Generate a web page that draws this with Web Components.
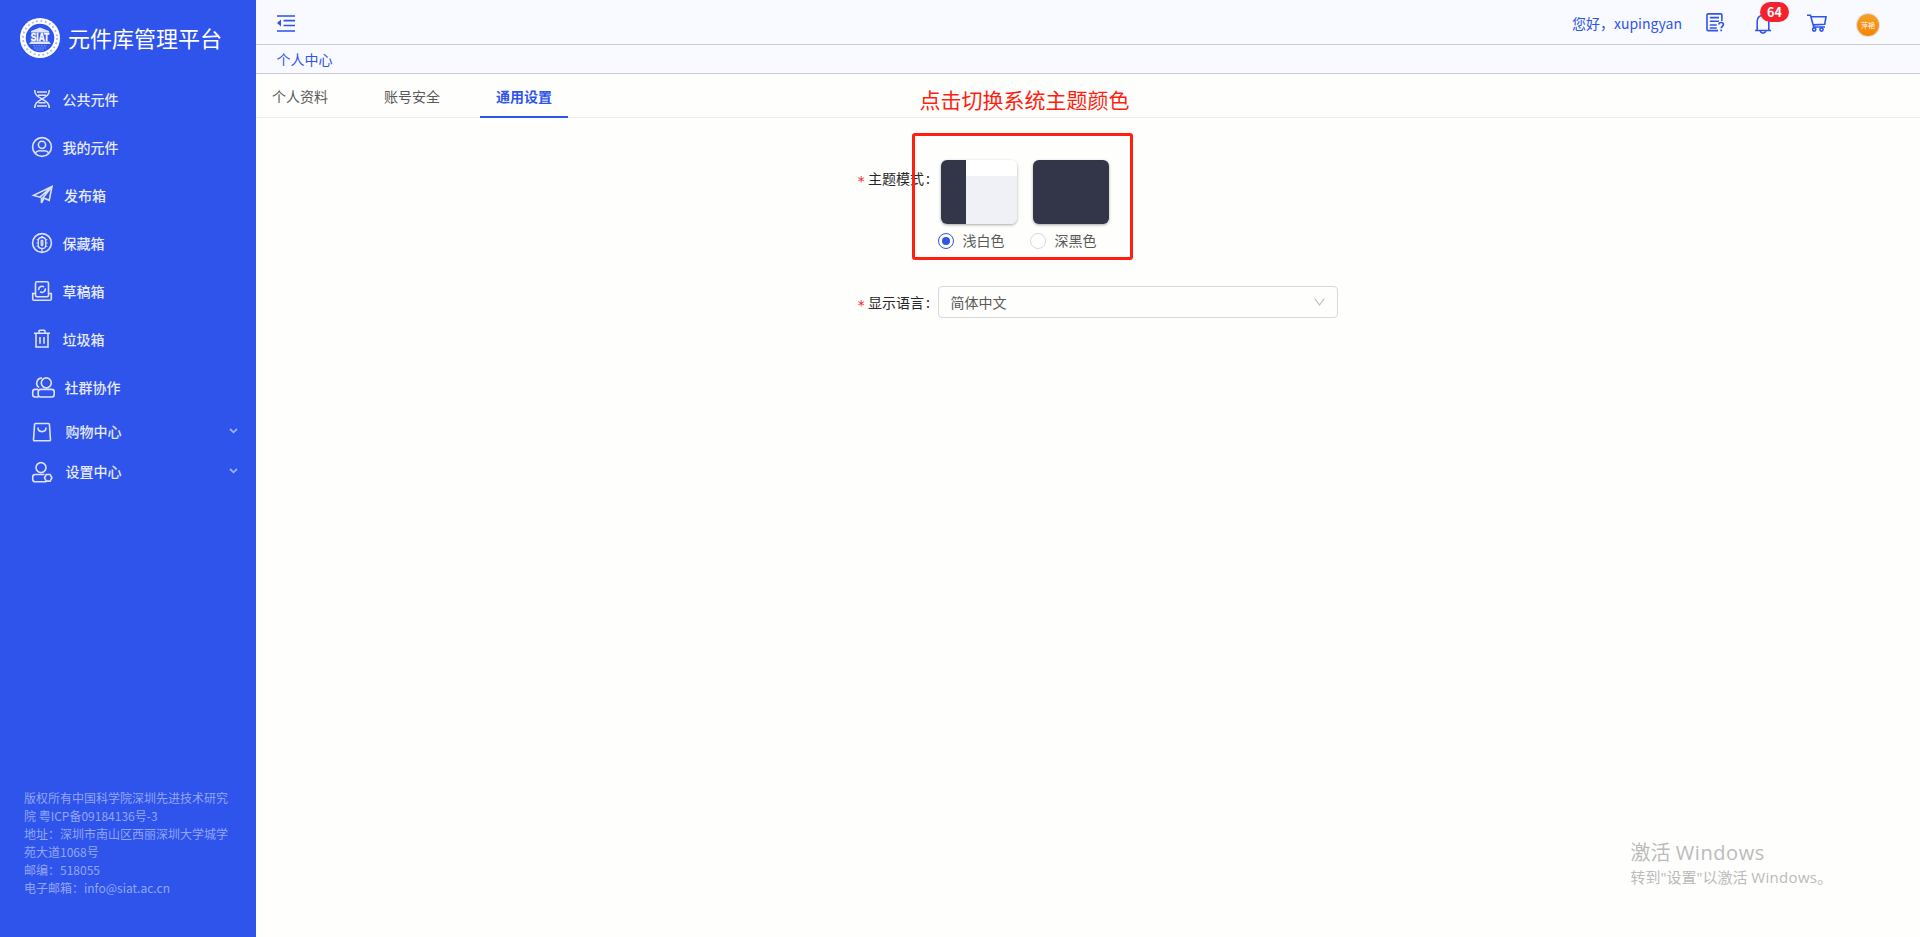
<!DOCTYPE html>
<html lang="zh-CN">
<head>
<meta charset="utf-8">
<title>元件库管理平台</title>
<style>
html,body{margin:0;height:100%;overflow:hidden}
body{font-family:"Noto Sans CJK SC",sans-serif;font-size:14px;color:#595959;background:#fefefd}
</style>
</head>
<body>
<app-shell></app-shell>
<script>
function define(name, html) {
  const t = document.createElement('template');
  t.innerHTML = html;
  customElements.define(name, class extends HTMLElement {
    constructor() {
      super();
      this.attachShadow({mode: 'open'}).appendChild(t.content.cloneNode(true));
    }
  });
}

const icons = {
  dna: '<path d="M2.700 1c0 5 3 6.500 7.300 9s7.300 4 7.300 9M17.300 1c0 5-3 6.500-7.300 9s-7.300 4-7.300 9M5 3h10M6 6.300h8M6.500 13.700h7M5 17h10"/>',
  user: '<circle cx="10" cy="10" r="9.4"/><circle cx="10" cy="7.800" r="3.600"/><path d="M3.200 16c1-1.600 2.600-2.400 5-2.200 1.200.2 2.400.2 3.600 0 2.400-.2 4 .6 5 2.200"/>',
  send: '<path d="M1.500 10.400 20 1.500l-2.800 13.800-6.200-2.600L20 1.500 8 12.200zM9.500 12.500V18l2.300-4.600"/>',
  keep: '<circle cx="10" cy="10" r="9.400"/><rect x="6.300" y="4.500" width="7.400" height="11" rx="3.200" stroke-width="1.300"/><rect x="9.200" y="7.500" width="1.600" height="5" rx=".5" stroke-width="1.300"/><path stroke-width="1.200" d="M4.700 6.500l1.600.5M4.500 10h1.800M4.700 13.500l1.600-.5M15.300 6.500l-1.600.5M15.500 10h-1.800M15.300 13.500l-1.600-.5M9 3.500h2M10 15.500V19"/>',
  draft: '<rect x="3.500" y=".7" width="13" height="15" rx="1.500"/><path d="M3.500 12.500H.7V18q0 1.300 1.300 1.300h16q1.300 0 1.300-1.300v-5.500h-2.800M6.700 9.200a3.300 3.300 0 0 1 5.300-3.200M13.300 7.400a3.300 3.300 0 0 1-5.300 3.200"/>',
  trash: '<path d="M2 4.200h16M7 4V2q0-.8.800-.8h4.400q.8 0 .8.800v2M4 4.500V18h12V4.500M8 8v6.800M12 8v6.800"/>',
  group: '<circle cx="14.300" cy="5.900" r="5"/><path d="M10 1.100a5 5 0 0 0-2.800 9.300"/><rect x="6.200" y="12.400" width="16" height="7.600" rx="2.500"/><path d="M6 12.400H3Q.7 12.400.7 15v2.500Q.7 20 3 20h3.500"/>',
  bag: '<path d="M3.500 1.500h13q.8 0 .9.800L18.500 18q0 .8-.8.800H2.300q-.8 0-.8-.8L2.600 2.300q.1-.8.900-.8zM6 5.500c0 5.500 8 5.500 8 0"/>',
  setting: '<circle cx="9" cy="5.600" r="5"/><path d="M12.500 12.500H3.300Q.7 12.500.7 15v2.200q0 2.600 2.600 2.600h11"/><path d="m14.300 12.500h3.800l1.800 3.300-1.800 3.300h-3.800l-1.800-3.300z"/>'
};

define('brand-logo', `
<style>
:host{display:flex;align-items:center;height:76px;padding-left:20px;gap:8px;box-sizing:border-box;color:#fff;font-size:22px;line-height:32px}
svg{display:block;flex:none;font-family:"Liberation Sans",sans-serif}
span{margin-top:-2px}
</style>
<svg width="40" height="40" viewBox="0 0 40 40">
<circle cx="20" cy="20" r="20" fill="#fff"/><circle cx="20" cy="20" r="14.300" fill="#2f54eb"/>
<circle cx="20" cy="20" r="17" fill="none" stroke="#a3b4f7" stroke-width="1.800" stroke-dasharray="1.800 2.650"/>
<path d="M20 9.500 29 13v1.500H11V13zM11 23.500h18l2 2.500H9z" fill="#fff" fill-opacity=".85"/>
<path d="M13 27.800h14M14 30h12M16 32h8" stroke="#9aadf7" stroke-width=".8" stroke-dasharray="2 .7"/>
<text x="20" y="23.300" text-anchor="middle" font-size="11" font-weight="bold" fill="#fff" stroke="#fff" stroke-width=".4" textLength="18.500" lengthAdjust="spacingAndGlyphs">SIAT</text>
</svg><span><slot></slot></span>`);

const itemT = `
<style>
:host{display:flex;align-items:center;height:48px;padding:0 18px 2px 32px;color:#e6eafd;font-weight:500;line-height:22px;box-sizing:border-box}
:host([sub]){height:40px}
.icon{margin-top:-1px}
:host([sub]) .icon{margin-top:2px}
svg{display:block;flex:none;fill:none;stroke:#dde3fc;stroke-width:1.600;overflow:visible}
span{flex:1}
.arrow{display:none;stroke:#9dafF6;stroke-width:1.800}
:host([sub]) .arrow{display:block}
</style>
<svg class="icon" width="20" height="20" viewBox="0 0 20 20"></svg><span><slot></slot></span>
<svg class="arrow" width="9" height="6" viewBox="0 0 9 6"><path d="m1 1 3.500 3.300L8 1"/></svg>`;
customElements.define('menu-item', class extends HTMLElement {
  constructor() {
    super();
    this.attachShadow({mode: 'open'}).innerHTML = itemT;
  }
  connectedCallback() {
    const svg = this.shadowRoot.querySelector('.icon');
    svg.innerHTML = icons[this.getAttribute('icon')];
    svg.style.marginRight = (this.getAttribute('gap') || 10.500) + 'px';
  }
});

define('side-bar', `
<style>
:host{display:flex;flex-direction:column;width:256px;flex:none;background:#2f54eb;height:100%}
nav{flex:1}
footer{font-size:12px;line-height:18px;color:#92a6f7;padding:0 20px 40px 24px;white-space:nowrap}
</style>
<brand-logo>元件库管理平台</brand-logo>
<nav>
<menu-item icon="dna">公共元件</menu-item>
<menu-item icon="user">我的元件</menu-item>
<menu-item icon="send" gap="12">发布箱</menu-item>
<menu-item icon="keep">保藏箱</menu-item>
<menu-item icon="draft">草稿箱</menu-item>
<menu-item icon="trash">垃圾箱</menu-item>
<menu-item icon="group" gap="12.500">社群协作</menu-item>
<menu-item sub icon="bag" gap="13.500">购物中心</menu-item>
<menu-item sub icon="setting" gap="13.500">设置中心</menu-item>
</nav>
<footer>版权所有中国科学院深圳先进技术研究<br>院 粤ICP备09184136号-3<br>地址：深圳市南山区西丽深圳大学城学<br>苑大道1068号<br>邮编：518055<br>电子邮箱：info@siat.ac.cn</footer>`);

define('count-badge', `
<style>
:host{display:block;position:relative}
b{position:absolute;left:5px;top:-8px;width:29px;height:20px;border-radius:10px;background:#f5222d;color:#fff;font-size:12.500px;line-height:20px;font-weight:700;text-align:center}
</style><slot></slot><b>64</b>`);

define('top-bar', `
<style>
:host{display:flex;align-items:center;height:45px;box-sizing:border-box;border-bottom:1px solid #c9cbd2;background:#f9faff;color:#2f54eb;padding:0 41px 0 21px}
svg{display:block;fill:none;stroke:#2f54eb;stroke-width:1.600;overflow:visible}
.hello{margin-left:auto;margin-right:24px;line-height:22px;padding-top:1px}
.report{margin:0 30px 0 0}
.cart{margin:2px 0 0 36px}
.avatar{display:flex;align-items:center;justify-content:center;width:22px;height:22px;border-radius:50%;background:linear-gradient(#f7a02a,#f58500);box-shadow:0 0 1px 1px #d9dce3;color:#fff;font-size:7px;line-height:10px;margin:5px 0 0 30px}
</style>
<svg width="18" height="17" viewBox="0 0 18 17" style="margin-top:2px"><path d="M0 1h18M0 16h18" stroke="#5c7bf0" stroke-width="2"/><path d="M6.500 5.700H18M6.500 10.500H18" stroke-width="1.700"/><path d="M0 8 4 4.500v7z" fill="#2f54eb" stroke="none"/></svg>
<span class="hello">您好，xupingyan</span>
<svg class="report" width="19" height="19" viewBox="0 0 19 19"><path d="M12 17.600H2.200Q1 17.600 1 16.500V2Q1 .9 2.200.9h12.500q1.200 0 1.200 1.100v6M3.800 4.600H13M3.800 8.300H13M3.800 12h7M3.800 15h7"/><path d="M12.900 11.600c0-2.800 4.500-2.800 4.500 0 0 1.800-2.200 1.800-2.200 3.700M15.200 16.600v1.700" stroke-width="1.700"/></svg>
<count-badge><svg width="16" height="20" viewBox="0 0 16 20" style="margin-top:4px"><path d="M0 16.500h16M2.200 16.500V7a5.800 5.800 0 0 1 11.600 0v9.500M8 1.500V0M5.300 17c.4 2.800 5 2.800 5.400 0"/></svg></count-badge>
<svg class="cart" width="20" height="18" viewBox="0 0 20 18"><path d="M0 1.200h3.500L6.700 13H18M4.200 2.800H19l-1.300 7.500-11.500.6"/><circle cx="7.200" cy="15.500" r="1.600"/><circle cx="14.500" cy="15.500" r="1.600"/></svg>
<span class="avatar">萍艳</span>`);

define('crumb-bar', `
<style>
:host{display:flex;align-items:center;height:29px;box-sizing:border-box;border-bottom:1px solid #c9cbd2;background:#f9faff;color:#2f54eb;padding:0 0 0 20.500px;line-height:22px}
</style><slot></slot>`);

define('tab-item', `
<style>
:host{display:block;padding:11px 16px 10px;line-height:22px;height:44px;box-sizing:border-box;border-bottom:2px solid transparent;margin-bottom:-1px}
:host([active]){color:#2f54eb;font-weight:700;border-color:#2f54eb}
</style><slot></slot>`);

define('tab-bar', `
<style>:host{display:flex;gap:24px;height:44px;box-sizing:border-box;border-bottom:1px solid #ececec}</style><slot></slot>`);

define('form-row', `
<style>
:host{display:flex}
.label{width:80px;color:#262626;line-height:22px;white-space:nowrap;flex:none}
i{color:#f5222d;font:14px "DejaVu Sans Mono",monospace;margin:0 3px 0 -1px;display:inline-block;width:8px;position:relative;top:2px}
.label::after{content:":";margin-left:2px}
</style>
<div class="label"><i>*</i><slot name="label"></slot></div><slot></slot>`);

define('theme-option', `
<style>
:host{display:block;width:92px}
.card{display:flex;margin-left:3px;width:76px;height:64px;border-radius:6px;background:#333549;overflow:hidden;box-shadow:0 1px 3px rgba(0,0,0,.35)}
:host([light]) .card{background:linear-gradient(90deg,#333549 25.500px,transparent 25.500px),linear-gradient(#fff 16px,#f0f1f6 16px)}
.radio{display:flex;align-items:center;gap:8.500px;margin-top:5px;line-height:22px}
.dot{width:16px;height:16px;box-sizing:border-box;border:1px solid #d9d9d9;border-radius:50%;background:#fff;display:grid;place-items:center;margin-top:2px}
:host([light]) .dot{border-color:#2f54eb}
:host([light]) .dot::after{content:"";width:8px;height:8px;border-radius:50%;background:#2f54eb}
</style>
<div class="card"></div><div class="radio"><span class="dot"></span><span><slot></slot></span></div>`);

define('select-box', `
<style>
:host{display:flex;align-items:center;justify-content:space-between;width:400px;height:32px;box-sizing:border-box;border:1px solid #d9d9d9;border-radius:4px;padding:0 12px 0 11.500px;line-height:22px}
svg{fill:none;stroke:#bfbfbf;stroke-width:1.200}
</style><span><slot></slot></span><svg width="11" height="8" viewBox="0 0 11 8"><path d="m.7.5 4.800 6.500L10.300.5"/></svg>`);

/* Callout drawn above the page: caption plus frame */
define('call-out', `
<style>
:host{position:absolute;left:912px;top:83px;width:221px;color:#ff1e10}
p{margin:0 0 18px 7.500px;font-size:21px;line-height:32px;font-weight:400;white-space:nowrap}
div{height:127px;box-sizing:border-box;border:3px solid #ff1e10;border-radius:3px}
</style><p><slot></slot></p><div></div>`);

define('activation-mark', `
<style>
:host{position:absolute;left:1630.500px;top:839px;color:#bbb;font-family:"Open Sans","Noto Sans CJK SC",sans-serif;white-space:nowrap}
h4,p{margin:0;font-weight:400}
h4{font-size:20px;line-height:28px}
h4 span{letter-spacing:.6px}
p{font-size:15px;line-height:20px}
p span{letter-spacing:.3px}
</style><h4>激活 <span>Windows</span></h4><p>转到"设置"以激活 <span>Windows。</span></p>`);

define('app-shell', `
<style>
:host{display:flex;height:937px;position:relative;overflow:hidden}
main{flex:1;min-width:0}
form{padding:42px 0 0 602px}
.top{align-items:flex-start}
.top [slot]{display:inline-block;padding-top:7px}
.second{margin-top:35px;align-items:center}
</style>
<side-bar></side-bar>
<main>
<top-bar></top-bar>
<crumb-bar>个人中心</crumb-bar>
<tab-bar><tab-item>个人资料</tab-item><tab-item>账号安全</tab-item><tab-item active>通用设置</tab-item></tab-bar>
<form>
<form-row class="top"><span slot="label">主题模式</span><theme-option light>浅白色</theme-option><theme-option>深黑色</theme-option></form-row>
<form-row class="second"><span slot="label">显示语言</span><select-box>简体中文</select-box></form-row>
</form>
</main>
<call-out>点击切换系统主题颜色</call-out>
<activation-mark></activation-mark>`);
</script>
</body>
</html>
